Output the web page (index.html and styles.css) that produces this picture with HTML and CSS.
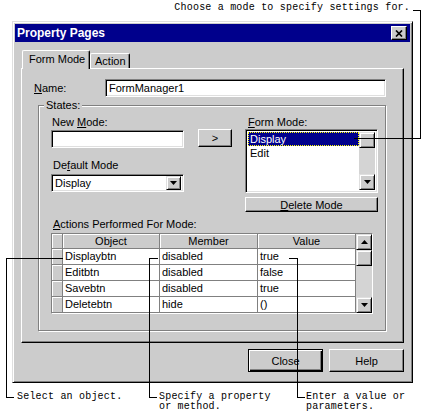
FILE: index.html
```html
<!DOCTYPE html>
<html lang="en">
<head>
	<meta charset="UTF-8">
	<title>Property Pages</title>
	<link rel="stylesheet" href="styles.css">
</head>
<body>
<div class="page">
	<p class="note note-top">Choose a mode to specify settings for.</p>

	<div class="dlg">
		<div class="titlebar">
			<span>Property Pages</span>
			<span class="btn xbtn"><svg width="8" height="7" viewBox="0 0 8 7"><path d="M1 0.5L7 6.5M7 0.5L1 6.5" stroke="#000" stroke-width="1.7"/></svg></span>
		</div>

		<div class="tabs">
			<span class="tab tab-on">Form Mode</span>
			<span class="tab">Action</span>
		</div>

		<div class="panel">
			<div class="row-name">
				<span class="lbl lbl-name"><u>N</u>ame:</span>
				<div class="field field-name">FormManager1</div>
			</div>

			<div class="group">
				<span class="legend">States:</span>
				<div class="top">
					<div class="col">
						<div class="lbl lbl-new">New <u>M</u>ode:</div>
						<div class="field field-new"></div>
						<div class="lbl lbl-def">De<u>f</u>ault Mode</div>
						<div class="field combo">
							<span class="combo-text">Display</span>
							<span class="btn drop"><svg width="7" height="4" viewBox="0 0 7 4"><path d="M0 0h7L3.5 4z"/></svg></span>
						</div>
					</div>
					<div class="btn btn-add">&gt;</div>
					<div class="col col-right">
						<div class="lbl lbl-form"><u>F</u>orm Mode:</div>
						<div class="field list">
							<div class="list-items">
								<div class="item item-sel">Display</div>
								<div class="item">Edit</div>
							</div>
							<div class="vscroll">
								<span class="btn sb-thumb"></span>
								<span class="sb-track"></span>
								<span class="btn sb-btn"><svg width="7" height="4" viewBox="0 0 7 4"><path d="M0 0h7L3.5 4z"/></svg></span>
							</div>
						</div>
						<div class="btn btn-del"><span><u>D</u>elete Mode</span></div>
					</div>
				</div>

				<div class="lbl lbl-act"><u>A</u>ctions Performed For Mode:</div>
				<div class="grid">
					<div class="cells">
						<span class="hc"></span><span class="hc">Object</span><span class="hc">Member</span><span class="hc">Value</span>
						<span class="hc"></span><span class="dc">Displaybtn</span><span class="dc">disabled</span><span class="dc">true</span>
						<span class="hc"></span><span class="dc">Editbtn</span><span class="dc">disabled</span><span class="dc">false</span>
						<span class="hc"></span><span class="dc">Savebtn</span><span class="dc">disabled</span><span class="dc">true</span>
						<span class="hc"></span><span class="dc">Deletebtn</span><span class="dc">hide</span><span class="dc">()</span>
					</div>
					<div class="vscroll">
						<span class="btn sb-btn"><svg width="7" height="4" viewBox="0 0 7 4"><path d="M3.5 0L7 4H0z"/></svg></span>
						<span class="btn sb-thumb"></span>
						<span class="sb-track"></span>
						<span class="btn sb-btn"><svg width="7" height="4" viewBox="0 0 7 4"><path d="M0 0h7L3.5 4z"/></svg></span>
					</div>
				</div>
			</div>
		</div>

		<div class="actions">
			<div class="btn btn-dlg btn-def">Close</div>
			<div class="btn btn-dlg">Help</div>
		</div>
	</div>

	<div class="notes">
		<p class="note">Select an object.</p>
		<p class="note">Specify a property<br>or method.</p>
		<p class="note">Enter a value or<br>parameters.</p>
	</div>

	<!-- callout lines -->
	<i class="ln l1a"></i><i class="ln l1b"></i><i class="ln l1c"></i>
	<i class="ln l2a"></i><i class="ln l2b"></i><i class="ln l2c"></i>
	<i class="ln l3a"></i><i class="ln l3b"></i><i class="ln l3c"></i>
	<i class="ln l4a"></i><i class="ln l4b"></i><i class="ln l4c"></i>
</div>
</body>
</html>
```

FILE: styles.css
```css
body{
	margin: 0;
	background: #fff;
	font-family: "Liberation Sans", Arial, sans-serif;
	font-size: 11px;
	color: #000;
}
.page{
	position: relative;
	width: 426px;
	height: 417px;
	padding-top: 3px;
	box-sizing: border-box;
	overflow: hidden;
}
u{
	text-decoration: underline;
	text-underline-offset: 1px;
}

/* callout text */
.note{
	margin: 0;
	font-family: "Liberation Mono", "DejaVu Sans Mono", monospace;
	font-size: 10px;
	line-height: 10px;
	letter-spacing: 0.2px;
	white-space: nowrap;
}
.note-top{
	height: 10px;
	padding-right: 16px;
	text-align: right;
}
.notes{
	display: grid;
	grid-template-columns: 142px 147px auto;
	margin-top: 9px;
	padding-left: 17px;
}

/* dialog frame */
.dlg{
	width: 401px;
	height: 362px;
	margin: 8px 0 0 12px;
	box-sizing: border-box;
	padding: 2px;
	background: #ccc;
	border: 1px solid;
	border-color: #dfdfdf #000 #000 #dfdfdf;
	box-shadow: inset 1px 1px #fff, inset -1px -1px #808080;
}
.titlebar{
	height: 18px;
	display: flex;
	align-items: center;
	justify-content: space-between;
	padding: 0 3px 0 2px;
	background: #00008c;
	color: #fff;
	font-weight: bold;
	font-size: 12px;
}
.btn{
	box-sizing: border-box;
	display: flex;
	align-items: center;
	justify-content: center;
	background: #ccc;
	border: 1px solid;
	border-color: #fff #000 #000 #fff;
	box-shadow: inset -1px -1px #808080;
}
.xbtn{
	width: 16px;
	height: 14px;
}

/* tabs */
.tabs{
	display: flex;
	align-items: flex-end;
	height: 18px;
	margin-top: 8px;
	padding-left: 7px;
}
.tab{
	box-sizing: border-box;
	height: 15px;
	width: 40px;
	padding-left: 4px;
	line-height: 14px;
	background: #ccc;
	border: 1px solid;
	border-bottom: 0;
	border-color: #fff #000 #000 #fff;
	border-radius: 2px 2px 0 0;
	box-shadow: inset -1px 0 #808080;
}
.tab-on{
	position: relative;
	z-index: 1;
	width: 68px;
	height: 19px;
	margin-bottom: -1px;
	padding-left: 6px;
	line-height: 17px;
}
.panel{
	width: 383px;
	height: 275px;
	margin-left: 6px;
	box-sizing: border-box;
	border: 1px solid;
	border-color: #fff #000 #000 #fff;
	box-shadow: inset -1px -1px #808080;
}

/* fields */
.lbl{
	height: 12px;
	line-height: 12px;
	white-space: nowrap;
}
.field{
	box-sizing: border-box;
	background: #fff;
	border: 1px solid;
	border-color: #808080 #fff #fff #808080;
	box-shadow: inset 1px 1px #000, inset -1px -1px #dfdfdf;
}
.row-name{
	display: flex;
	align-items: center;
	margin-top: 10px;
}
.lbl-name{
	width: 71px;
	margin-left: 12px;
}
.field-name{
	width: 281px;
	height: 18px;
	padding-left: 3px;
	line-height: 16px;
}

/* States group */
.group{
	position: relative;
	width: 348px;
	height: 226px;
	margin: 8px 0 0 16px;
	box-sizing: border-box;
	padding: 10px 0 0 12px;
	border: 1px solid #808080;
	box-shadow: 1px 1px #fff, inset 1px 1px #fff;
}
.legend{
	position: absolute;
	top: -7px;
	left: 5px;
	padding: 0 2px;
	line-height: 13px;
	background: #ccc;
}
.top{
	display: flex;
	align-items: flex-start;
}
.col{
	width: 133px;
	display: flex;
	flex-direction: column;
}
.col-right{
	margin-left: 13px;
}
.lbl-new{ padding-left: 1px; }
.lbl-def{ margin-top: 11px; padding-left: 2px; }
.lbl-form{ padding-left: 3px; }
.field-new{
	height: 18px;
	margin-top: 2px;
}
.combo{
	height: 18px;
	margin-top: 3px;
	display: flex;
	align-items: center;
	padding: 2px;
}
.combo-text{
	flex: 1;
	padding-left: 1px;
}
.drop{
	width: 15px;
	height: 14px;
	border-color: #dfdfdf #000 #000 #dfdfdf;
	box-shadow: inset 1px 1px #fff, inset -1px -1px #808080;
}
.btn-add{
	width: 34px;
	height: 18px;
	margin: 13px 0 0 14px;
}
.list{
	height: 64px;
	margin-top: 1px;
	display: flex;
	padding: 2px;
}
.list-items{
	flex: 1;
}
.item{
	height: 14px;
	line-height: 14px;
	padding-left: 2px;
}
.item-sel{
	background: #00008c;
	color: #fff;
	outline: 1px dotted #ff0;
	outline-offset: -1px;
}
.vscroll{
	width: 16px;
	display: flex;
	flex-direction: column;
}
.sb-btn,
.sb-thumb{
	height: 16px;
	flex: none;
	border-color: #dfdfdf #000 #000 #dfdfdf;
	box-shadow: inset 1px 1px #fff, inset -1px -1px #808080;
}
.sb-track{
	flex: 1;
	background: #d4d4d4;
}
.btn-del{
	height: 15px;
	margin-top: 4px;
}

/* actions grid */
.lbl-act{
	margin-top: 6px;
	padding-left: 2px;
}
.grid{
	width: 322px;
	height: 81px;
	margin-top: 3px;
	box-sizing: border-box;
	display: flex;
	border: 1px solid;
	border-color: #808080 #fff #fff #808080;
}
.cells{
	flex: 1;
	display: grid;
	grid-template-columns: 11px 97px 98px 98px;
	grid-template-rows: 15px repeat(4, 16px);
}
.hc,
.dc{
	box-sizing: border-box;
	border-right: 1px solid #808080;
	border-bottom: 1px solid #808080;
	white-space: nowrap;
	overflow: hidden;
}
.hc{
	background: #ccc;
	box-shadow: inset 1px 1px #fff;
	text-align: center;
	line-height: 14px;
}
.dc{
	background: #fff;
	padding-left: 2px;
	line-height: 15px;
}

/* bottom buttons */
.actions{
	display: flex;
	justify-content: flex-end;
	gap: 6px;
	margin-top: 6px;
	padding-right: 6px;
}
.btn-dlg{
	width: 75px;
	height: 23px;
}
.btn-def{
	border-color: #000;
	box-shadow: inset 1px 1px #fff, inset -1px -1px #000, inset -2px -2px #808080;
}

/* callout lines */
.ln{
	position: absolute;
	background: #000;
	width: 1px;
	height: 1px;
}
.l1a{ left: 413px; top: 10px; width: 8px; }
.l1b{ left: 420px; top: 10px; height: 129px; }
.l1c{ left: 354px; top: 138px; width: 67px; }
.l2a{ left: 6px; top: 258px; width: 57px; }
.l2b{ left: 6px; top: 258px; height: 140px; }
.l2c{ left: 6px; top: 397px; width: 8px; }
.l3a{ left: 149px; top: 258px; width: 9px; }
.l3b{ left: 149px; top: 258px; height: 140px; }
.l3c{ left: 149px; top: 397px; width: 8px; }
.l4a{ left: 289px; top: 258px; width: 9px; }
.l4b{ left: 297px; top: 258px; height: 140px; }
.l4c{ left: 297px; top: 397px; width: 8px; }
```
